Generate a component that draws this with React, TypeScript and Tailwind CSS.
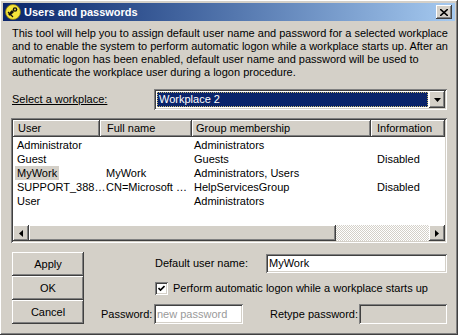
import React from "react";

const raised =
  "shadow-[inset_-1px_-1px_#404040,inset_1px_1px_#ffffff,inset_-2px_-2px_#808080,inset_2px_2px_#d4d0c8]";
const sunken =
  "shadow-[inset_1px_1px_#808080,inset_-1px_-1px_#ffffff,inset_2px_2px_#404040,inset_-2px_-2px_#d4d0c8]";

const users = [
  { user: "Administrator", full: "", group: "Administrators", info: "" },
  { user: "Guest", full: "", group: "Guests", info: "Disabled" },
  { user: "MyWork", full: "MyWork", group: "Administrators, Users", info: "", selected: true },
  { user: "SUPPORT_388…", full: "CN=Microsoft …", group: "HelpServicesGroup", info: "Disabled" },
  { user: "User", full: "", group: "Administrators", info: "" },
];

function AppIcon() {
  return (
    <svg width="16" height="16" viewBox="0 0 16 16">
      <circle cx="8" cy="8" r="7.5" fill="#f4e33a" stroke="#8a7a10" strokeWidth="0.8" />
      <path d="M3 10 L7 6 L9 8 L5 12 Z" fill="#111" />
      <circle cx="10" cy="5.5" r="2.3" fill="#111" />
      <circle cx="10" cy="5.5" r="0.9" fill="#f4e33a" />
      <path d="M6 11 L8 13 M4 9 L3 8" stroke="#111" strokeWidth="1.2" />
    </svg>
  );
}

function Arrow({ dir }: { dir: "left" | "right" | "down" }) {
  if (dir === "down")
    return (
      <svg width="7" height="4" viewBox="0 0 7 4">
        <path d="M0 0 H7 L3.5 4 Z" fill="#000" />
      </svg>
    );
  return (
    <svg width="4" height="7" viewBox="0 0 4 7">
      <path d={dir === "left" ? "M4 0 V7 L0 3.5 Z" : "M0 0 V7 L4 3.5 Z"} fill="#000" />
    </svg>
  );
}

export default function App() {
  return (
    <div
      className={`w-[458px] h-[335px] p-[3px] bg-[#d4d0c8] flex flex-col text-[11px] leading-[13px] text-black overflow-hidden ${raised}`}
      style={{ fontFamily: '"Liberation Sans", Arial, sans-serif' }}
    >
      {/* Title bar */}
      <div className="h-[18px] flex items-center pl-[2px] pr-[3px] bg-gradient-to-r from-[#0a246a] to-[#a6caf0]">
        <AppIcon />
        <span className="ml-[3px] text-white font-bold text-[11px]">Users and passwords</span>
        <button
          className={`ml-auto w-[16px] h-[14px] bg-[#d4d0c8] flex items-center justify-center ${raised}`}
        >
          <svg width="8" height="7" viewBox="0 0 8 7">
            <path d="M0 0 L8 7 M8 0 L0 7" stroke="#000" strokeWidth="1.6" />
          </svg>
        </button>
      </div>

      <div className="flex flex-col px-[8px] pt-[6px]">
        {/* Description */}
        <div className="pl-px whitespace-nowrap">
          <div>This tool will help you to assign default user name and password for a selected workplace</div>
          <div>and to enable the system to perform automatic logon while a workplace starts up. After an</div>
          <div>automatic logon has been enabled, default user name and password will be used to</div>
          <div>authenticate the workplace user during a logon procedure.</div>
        </div>

        {/* Workplace selector */}
        <div className="mt-[10px] h-[21px] flex items-center">
          <span className="pl-px underline w-[143px]">Select a workplace:</span>
          <div className={`flex-1 h-[21px] bg-white p-[2px] flex ${sunken}`}>
            <div className="flex-1 m-px bg-[#0a246a] text-white pl-[2px] flex items-center outline-1 outline-dotted outline-[#c8b870] -outline-offset-1">
              Workplace 2
            </div>
            <div className={`w-[16px] bg-[#d4d0c8] flex items-center justify-center ${raised}`}>
              <Arrow dir="down" />
            </div>
          </div>
        </div>

        {/* User list */}
        <div className={`mt-[8px] h-[125px] bg-white p-[2px] flex flex-col ${sunken}`}>
          <div className="h-[17px] flex bg-[#d4d0c8]">
            <div className={`w-[87px] pl-[5px] flex items-center ${raised}`}>User</div>
            <div className={`w-[92px] pl-[7px] flex items-center ${raised}`}>Full name</div>
            <div className={`w-[179px] pl-[4px] flex items-center ${raised}`}>Group membership</div>
            <div className={`flex-1 pl-[6px] flex items-center ${raised}`}>Information</div>
          </div>
          <div className="flex-1 pt-px">
            {users.map((u) => (
              <div key={u.user} className="h-[14px] flex items-center whitespace-nowrap">
                <div className="w-[87px] pl-[2px]">
                  <span className={`px-[2px] py-px ${u.selected ? "bg-[#d4d0c8]" : ""}`}>{u.user}</span>
                </div>
                <div className="w-[92px] pl-[6px]">{u.full}</div>
                <div className="w-[179px] pl-[2px]">{u.group}</div>
                <div className="flex-1 pl-[6px]">{u.info}</div>
              </div>
            ))}
          </div>
          <div className="h-[16px] flex">
            <div className={`w-[16px] bg-[#d4d0c8] flex items-center justify-center ${raised}`}>
              <Arrow dir="left" />
            </div>
            <div className={`w-[307px] bg-[#d4d0c8] ${raised}`} />
            <div className="flex-1 bg-[repeating-conic-gradient(#d4d0c8_0_25%,#ffffff_0_50%)] bg-[length:2px_2px]" />
            <div className={`w-[16px] bg-[#d4d0c8] flex items-center justify-center ${raised}`}>
              <Arrow dir="right" />
            </div>
          </div>
        </div>

        {/* Bottom area */}
        <div className="mt-[9px] flex">
          <div className="ml-px w-[72px] flex flex-col">
            {["Apply", "OK", "Cancel"].map((b) => (
              <button key={b} className={`h-[24px] bg-[#d4d0c8] flex items-center justify-center ${raised}`}>
                {b}
              </button>
            ))}
          </div>
          <div className="flex-1 flex flex-col pt-[2px]">
            <div className="h-[19px] flex items-center pl-[71px]">
              <span className="w-[111px]">Default user name:</span>
              <div className={`flex-1 h-[19px] bg-white pl-[3px] flex items-center ${sunken}`}>MyWork</div>
            </div>
            <div className="mt-[9px] h-[13px] flex items-center pl-[71px]">
              <div className={`w-[13px] h-[13px] bg-white flex items-center justify-center ${sunken}`}>
                <svg width="7" height="7" viewBox="0 0 7 7">
                  <path d="M0.5 3 L2.5 5 L6.5 1" stroke="#000" strokeWidth="1.6" fill="none" />
                </svg>
              </div>
              <span className="ml-[5px] whitespace-nowrap">Perform automatic logon while a workplace starts up</span>
            </div>
            <div className="mt-[9px] h-[20px] flex items-center pl-[17px]">
              <span className="w-[53px]">Password:</span>
              <div className={`w-[89px] h-[20px] bg-white pl-[3px] flex items-center text-[#9a9a9a] ${sunken}`}>
                new password
              </div>
              <span className="ml-[27px] w-[89px] whitespace-nowrap">Retype password:</span>
              <div className={`flex-1 h-[20px] bg-[#d4d0c8] ${sunken}`} />
            </div>
          </div>
        </div>
      </div>
    </div>
  );
}
